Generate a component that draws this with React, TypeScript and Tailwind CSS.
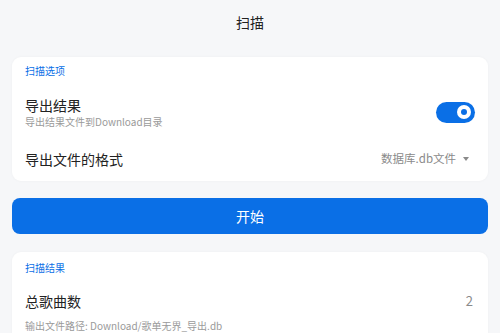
import React from "react";

const font = { fontFamily: '"Noto Sans CJK SC", "Noto Sans", sans-serif' };

const Toggle = ({ on }: { on: boolean }) => (
  <div
    className={`relative h-[21px] w-[39px] rounded-full ${on ? "bg-[#0a6fe6]" : "bg-gray-300"}`}
  >
    <div className="absolute right-[4px] top-[3.5px] flex h-[14px] w-[14px] items-center justify-center rounded-full bg-white">
      <div className="h-[6px] w-[6px] rounded-full bg-[#0a6fe6]" />
    </div>
  </div>
);

export default function App() {
  return (
    <div className="h-[333px] w-[500px] overflow-hidden bg-[#f6f7f9]" style={font}>
      {/* Header */}
      <div className="flex h-[45px] items-center justify-center text-[14px] text-[#222]">
        扫描
      </div>

      <div className="px-[12px] pt-[12px]">
        {/* Options card */}
        <div className="rounded-[9px] bg-white px-[13px] pb-[4px] shadow-[0_0_3px_rgba(0,0,0,0.04)]">
          <div className="flex h-[26px] items-center text-[10px] text-[#0a6fe6]">扫描选项</div>
          <div className="flex h-[58px] items-center justify-between">
            <div className="flex flex-col gap-[2px]">
              <span className="text-[14px] leading-[17px] text-[#222]">导出结果</span>
              <span className="text-[10px] leading-[12px] text-[#9a9a9a]">
                导出结果文件到Download目录
              </span>
            </div>
            <Toggle on />
          </div>
          <div className="flex h-[36px] items-center justify-between">
            <span className="text-[14px] text-[#222]">导出文件的格式</span>
            <div className="flex items-center gap-[7px] pr-[6px] text-[11.5px] text-[#8a8a8a]">
              <span>数据库.db文件</span>
              <svg width="6" height="4" viewBox="0 0 6 4">
                <path d="M0 0 L6 0 L3 4 Z" fill="#8a8a8a" />
              </svg>
            </div>
          </div>
        </div>

        {/* Start button */}
        <button className="mt-[17px] flex h-[36px] w-full items-center justify-center rounded-[8px] bg-[#0a6fe6] text-[14px] text-white">
          开始
        </button>

        {/* Result card */}
        <div className="mt-[18px] rounded-[9px] bg-white px-[13px] shadow-[0_0_3px_rgba(0,0,0,0.04)]">
          <div className="flex h-[30px] items-center text-[10px] text-[#0a6fe6]">扫描结果</div>
          <div className="flex h-[38px] items-center justify-between">
            <span className="text-[14px] text-[#222]">总歌曲数</span>
            <span className="pr-[2px] text-[13px] text-[#8a8a8a]">2</span>
          </div>
          <div className="text-[10px] leading-[12px] text-[#9a9a9a]">
            输出文件路径: Download/歌单无界_导出.db
          </div>
          <div className="h-[10px]" />
        </div>
      </div>
    </div>
  );
}
